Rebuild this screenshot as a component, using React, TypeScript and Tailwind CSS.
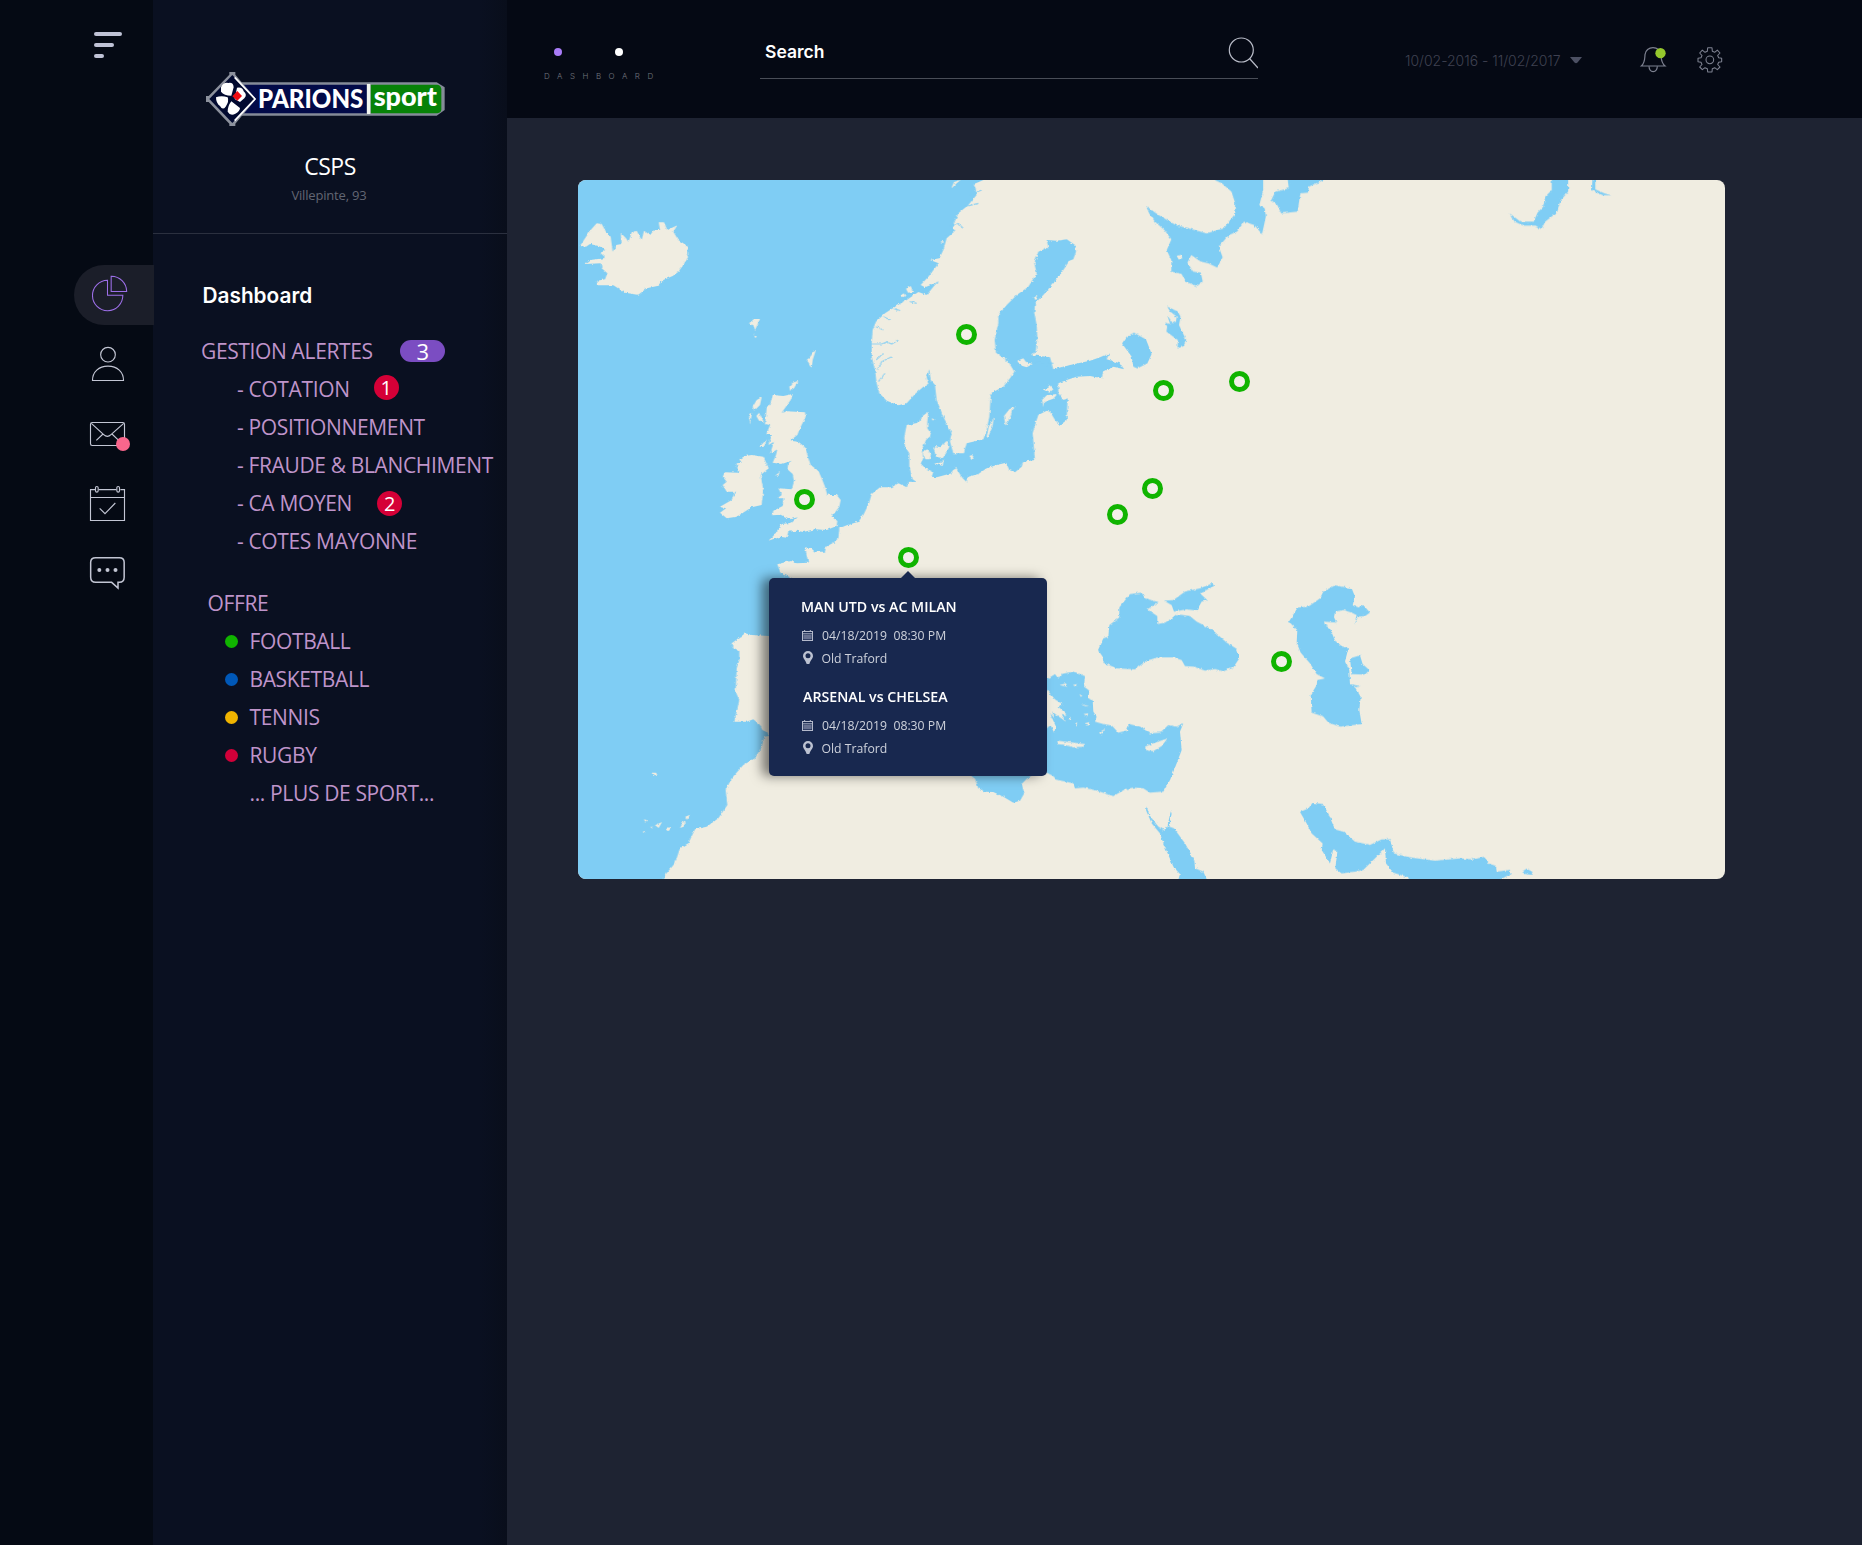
import type { ReactNode } from 'react';

const SEA = '#7fcdf4';
const LAND = '#f0ede1';

const sans = "font-['Open_Sans','Noto_Sans',sans-serif]";

function RailSlot({ viewBox, children }: { viewBox: string; children: ReactNode }) {
  return (
    <svg
      viewBox={viewBox}
      className="h-[70px] w-20 shrink-0"
      fill="none"
      stroke="#c3c6d4"
      strokeWidth="3.4"
    >
      {children}
    </svg>
  );
}

function Rail() {
  return (
    <nav className="flex w-[153px] shrink-0 flex-col bg-[#050a14]">
      <div className="mt-8 ml-[94px] flex h-[26px] flex-col justify-between">
        <span className="h-1 w-7 rounded-full bg-[#c0c3d6]" />
        <span className="h-1 w-5 rounded-full bg-[#c0c3d6]" />
        <span className="h-1 w-2.5 rounded-full bg-[#c0c3d6]" />
      </div>
      <div className="mt-[202px] ml-[74px] flex w-20 flex-col">
        <div className="relative z-10 flex h-[70px] items-center">
          <div className="my-[5px] flex h-[60px] w-20 items-center overflow-hidden rounded-l-full bg-[#1b1e29]">
            <svg viewBox="42 780 240 210" className="h-[70px] w-20 shrink-0" fill="none" stroke="#9d6fe8" strokeWidth="3.2">
              <path d="M142.500 841A45.500 45.500 0 1 0 188.500 886H142.500Z" />
              <path d="M153.500 829V874.500H200A46 46 0 0 0 153.500 829Z" />
            </svg>
          </div>
        </div>
        <RailSlot viewBox="42 0 240 210">
          <circle cx="144" cy="74" r="22" />
          <path d="M97.500 151.500C97.500 126 116 108.500 144 108.500S190.500 126 190.500 151.500Z" />
        </RailSlot>
        <RailSlot viewBox="42 210 240 210">
          <rect x="91.500" y="277.500" width="102" height="69" rx="5" />
          <path d="M94 280L131 314Q142 324 153 314L191 280M129 312L109 331M156 312L176 331" />
          <circle cx="189" cy="342" r="21" fill="#f9668c" stroke="none" />
        </RailSlot>
        <RailSlot viewBox="42 420 240 210">
          <path d="M105 479H91.500V571.500H193.500V479H181M116 479H169M91.500 502.500H193.500" />
          <rect x="106.500" y="469.500" width="8" height="17" rx="4" />
          <rect x="170.500" y="469.500" width="8" height="17" rx="4" />
          <path d="M119 535L135 551L166 519" />
        </RailSlot>
        <RailSlot viewBox="42 630 240 210">
          <path
            strokeWidth="4.500"
            d="M174 757H178Q192.500 757 192.500 742V697Q192.500 683 178 683H107Q92 683 92 697V742Q92 757 107 757H155L174 774Z"
          />
          <g fill="#c3c6d4" stroke="none">
            <circle cx="118" cy="720" r="6" />
            <circle cx="142.500" cy="720" r="6" />
            <circle cx="166.500" cy="720" r="6" />
          </g>
        </RailSlot>
      </div>
    </nav>
  );
}

function Logo() {
  return (
    <svg viewBox="438 216 717 162" className="h-[54px] w-[239px]">
      <path d="M540 247H1130L1154 262V330L1130 347H540Z" fill="#858b98" />
      <path d="M540 254H920V340H540Z" fill="#020a48" />
      <path d="M932 254H1132Q1144 256 1144 268V328Q1144 338 1132 340H932Z" fill="#078207" />
      <rect x="921" y="252" width="10" height="90" fill="#f2f5ef" />
      <path d="M508 216H526V224L588 297L526 371V378H508V371L446 306H438V288H446L508 224Z" fill="#8c919d" />
      <path d="M517 225L586 297L517 369L448 297Z" fill="#020a30" />
      <path d="M524 232L585 297L524 362" fill="none" stroke="#fff" strokeWidth="5" />
      <g fill="#fff">
        <path d="M483 262Q490 246 505 249Q520 246 521 262L514 287Q492 287 483 275Z" />
        <path d="M468 292Q484 286 503 292Q508 304 497 320Q488 332 480 318Q468 310 468 292Z" />
        <path d="M514 304L540 324Q540 334 526 341Q512 350 503 335Q503 318 514 304Z" />
        <path d="M531 263Q548 260 551 274Q563 284 553 295L540 306L524 297Z" />
      </g>
      <path d="M532 273L546 288L532 302L517 289Z" fill="#f00b10" />
      <g fill="#fff" className="font-['Lato','Noto_Sans',sans-serif] font-black">
        <text x="594" y="325" fontSize="79" textLength="316" lengthAdjust="spacingAndGlyphs">
          PARIONS
        </text>
        <text x="941" y="317" fontSize="82" textLength="190" lengthAdjust="spacingAndGlyphs">
          sport
        </text>
      </g>
    </svg>
  );
}

const alerts = [
  { label: 'COTATION', count: 1, nudge: '-mt-[5px]' },
  { label: 'POSITIONNEMENT' },
  { label: 'FRAUDE & BLANCHIMENT' },
  { label: 'CA MOYEN', count: 2, nudge: '-mt-px ml-px' },
  { label: 'COTES MAYONNE' },
];

const sports = [
  { label: 'FOOTBALL', dot: 'bg-[#10b400]' },
  { label: 'BASKETBALL', dot: 'bg-[#0058b8]' },
  { label: 'TENNIS', dot: 'bg-[#f0b400]' },
  { label: 'RUGBY', dot: 'bg-[#d10039]' },
];

function Sidebar() {
  return (
    <aside className="flex w-[354px] shrink-0 flex-col bg-[linear-gradient(to_right,#0a1021_92%,#090e1b)]">
      <div className="flex h-[234px] flex-col items-center border-b border-[#2b303f] pt-[72px]">
        <div className="-ml-[9px] h-[54px]">
          <Logo />
        </div>
        <p className={`${sans} mt-[25px] text-[23px] leading-[30px] tracking-[-0.5px] text-white`}>CSPS</p>
        <p className={`${sans} mt-1 -ml-[2px] text-[13px] leading-5 tracking-[-0.18px] text-[#626673]`}>Villepinte, 93</p>
      </div>
      <h1 className="mt-[47px] ml-[49.500px] font-['Inter',sans-serif] text-[20.8px] leading-[30px] font-semibold text-white">
        Dashboard
      </h1>
      <div className={`${sans} mt-[22px] text-[21px] tracking-[-0.36px] whitespace-nowrap text-[#bf94ca]`}>
        <div className="flex h-[38px] items-center pl-12">
          <span className="w-[199px]">GESTION ALERTES</span>
          <span className="-mt-[3px] flex h-[22px] w-[45px] items-center justify-center rounded-full bg-[#7b4dc2] text-[22px] leading-[22px] font-medium text-white">
            3
          </span>
        </div>
        <ul>
          {alerts.map((a) => (
            <li key={a.label} className="flex h-[38px] items-center gap-6 pl-[84px]">
              <span>- {a.label}</span>
              {a.count && (
                <span
                  className={`${a.nudge} flex size-[25px] items-center justify-center rounded-full bg-[#d50037] text-[20px] font-medium text-white`}
                >
                  {a.count}
                </span>
              )}
            </li>
          ))}
        </ul>
        <div className="mt-6 flex h-[38px] items-center pl-[54.500px]">OFFRE</div>
        <ul>
          {sports.map((s) => (
            <li key={s.label} className="flex h-[38px] items-center gap-[11.500px] pl-[72px]">
              <span className={`-mt-[2px] size-[13px] rounded-full ${s.dot}`} />
              <span>{s.label}</span>
            </li>
          ))}
          <li className="flex h-[38px] items-center pl-[96.500px]">... PLUS DE SPORT...</li>
        </ul>
      </div>
    </aside>
  );
}

function Header() {
  return (
    <header className="flex h-[118px] items-start bg-[#050914] font-['Inter',sans-serif]">
      <div className="mt-[47.5px] ml-[37px] w-[216px]">
        <div className="flex gap-[53px] pl-[10px]">
          <span className="size-2 rounded-full bg-[#a97cf8]" />
          <span className="size-2 rounded-full bg-white" />
        </div>
        <p className="mt-[14px] text-[8px] leading-3 font-light tracking-[7.5px] text-[#72767f]">DASHBOARD</p>
      </div>
      <div className="mt-[30px] flex h-[49px] w-[498px] items-start justify-between border-b border-[#494d57] pl-[5px]">
        <span className="mt-[10px] text-[17.5px] leading-6 font-semibold text-white">Search</span>
        <svg viewBox="0 0 34 34" className="mt-[5px] size-[34px]" fill="none" stroke="#b9bcc8" strokeWidth="1.200">
          <circle cx="17.300" cy="15" r="12" />
          <path d="M25.500 23.500L34 33" />
        </svg>
      </div>
      <div className="mt-[45.500px] ml-[147px] flex h-[30px] items-center text-[#3f4151]">
        <span className="w-[165px] text-[14px] font-light tracking-[-0.02px]">10/02-2016 - 11/02/2017</span>
        <svg viewBox="0 0 12 7" className="h-[7px] w-3">
          <path d="M0 0H12L7.500 5.500Q6 7 4.500 5.500Z" fill="#4c5063" />
        </svg>
      </div>
      <svg
        viewBox="838 75 90 90"
        className="mt-[45px] ml-[57px] size-[30px]"
        fill="none"
        stroke="#7d8190"
        strokeWidth="3.600"
      >
        <path d="M845 138C856 128 855 118 856 104C857 91 868 83 880 83S903 91 904 104C905 118 904 128 916 138Z" />
        <path d="M868 139C869 160 892 160 893 139" />
        <circle cx="902.500" cy="99.500" r="15.500" fill="#96c82d" stroke="none" />
      </svg>
      <svg
        viewBox="1005 74 90 90"
        className="mt-[45px] ml-[26px] size-[30px]"
        fill="none"
        stroke="#7d8190"
        strokeWidth="3.200"
        strokeLinejoin="round"
      >
        <path d="M1043 82.500H1056L1057 92.500L1064 96L1072 89.500L1080 98L1073 105.500L1076 112L1085 113.500V124.500L1076 126L1073 132.500L1080 140L1072 148L1064 142L1057 145L1056 155H1043L1042 145L1035 142L1027 148L1019 140L1026 132.500L1023 126L1014 124.500V113.500L1023 112L1026 105.500L1019 98L1027 89.500L1035 96L1042 92.500Z" />
        <circle cx="1049.500" cy="118.500" r="11.500" />
      </svg>
    </header>
  );
}

function EuropeMap() {
  return (
    <svg viewBox="24 30 3441 2097" className="block h-[699px] w-[1147px] rounded-lg">
      <defs>
        <filter id="coast" x="0" y="0" width="100%" height="100%">
          <feTurbulence type="fractalNoise" baseFrequency="0.1" numOctaves="2" seed="4" result="n" />
          <feDisplacementMap in="SourceGraphic" in2="n" scale="9" xChannelSelector="R" yChannelSelector="G" />
          <feGaussianBlur stdDeviation="1.2" />
        </filter>
      </defs>
      <rect x="24" y="30" width="3441" height="2097" fill={LAND} />
      <g filter="url(#coast)">
        {/* Atlantic, North Sea and Baltic */}
        <path
          fill={SEA}
          d="M-40 -30H1250L1240 30L1212 42L1222 72L1195 105L1165 130L1150 165L1152 185L1130 205L1120 240L1108 265L1080 270L1106 280L1075 320L1052 345L1065 352L1100 338L1070 375L1045 366L1010 390L975 410L945 430L918 455L908 480L905 520L905 560L915 600L920 640L928 670L950 692L985 706L1010 700L1035 672L1060 650L1075 645L1070 620L1078 598L1082 630L1095 645L1100 690L1120 740L1145 790L1140 815L1150 850L1182 850L1190 820L1240 808L1250 780L1258 740L1262 680L1265 668L1300 650L1320 625L1333 605L1315 575L1278 548L1274 510L1285 460L1285 435L1310 405L1340 375L1375 350L1400 310L1393 280L1405 245L1435 232L1430 210L1460 212L1490 208L1515 225L1518 245L1510 268L1498 272L1480 300L1450 340L1420 375L1395 400L1393 430L1400 465L1402 500L1398 540L1386 556L1440 562L1450 598L1500 585L1560 572L1590 562L1618 550L1610 568L1650 580L1662 598L1630 590L1600 605L1595 625L1560 618L1520 620L1490 630L1465 640L1465 670L1480 690L1493 685L1490 750L1470 766L1455 750L1440 725L1430 722L1405 735L1395 765L1388 790L1395 870L1360 875L1355 890L1335 907L1318 900L1308 878L1280 885L1250 895L1225 912L1190 922L1192 938L1178 925L1165 905L1158 890L1145 910L1100 922L1085 920L1090 905L1065 895L1052 880L1060 865L1055 840L1068 810L1085 795L1072 775L1072 755L1075 725L1058 738L1045 758L1010 765L1003 800L1005 830L1018 850L1018 890L1028 928L1040 936L1015 935L1010 952L985 940L965 952L930 952L905 972L897 1000L880 1035L865 1055L830 1066L808 1075L805 1105L790 1118L768 1130L765 1145L735 1145L722 1134L705 1132L715 1178L680 1180L660 1173L622 1183L632 1210L672 1226L750 1300L740 1398H597L545 1395L525 1390L510 1402L485 1420L492 1434L508 1443L508 1470L500 1495L497 1565L508 1590L493 1655L530 1655L550 1648L570 1665L577 1680L597 1690L597 1698L583 1700L575 1730L555 1765L520 1785L485 1825L467 1860L472 1905L445 1945L410 1970L375 1978L355 2020L330 2035L315 2080L285 2115L275 2160H-40Z"
        />
        <g fill={LAND}>
          {/* Iceland */}
          <path d="M30 228L45 205L62 180L80 160L95 162L108 185L122 200L125 222L128 245L138 225L155 222L152 188L168 205L175 215L185 190L200 182L215 210L222 182L240 195L252 180L270 180L266 157L282 157L292 180L322 166L310 185L325 210L352 228L355 260L340 285L325 305L308 318L280 330L262 348L230 355L205 374L165 368L130 346L82 346L82 332L105 328L112 310L95 295L92 280L45 282L60 270L108 264L92 250L108 238L85 228L60 222L48 230Z" />
          {/* Faroe, Shetland, Orkney and Hebrides */}
          <path d="M537 460L552 447L570 447L562 465L555 480L550 466ZM551 490L560 500L556 505ZM710 570L720 562L725 548L737 542L728 570L724 596L717 580ZM658 650L668 638L685 632L672 655L660 662Z" />
          <path d="M548 710L560 690L575 682L570 705L553 722ZM537 732L546 728L540 765ZM559 738L567 728L575 745L582 755L567 752Z" />
          {/* Great Britain */}
          <path d="M608 675L640 678L668 672L662 690L635 728L650 724L705 727L707 740L690 775L682 795L660 812L685 815L705 832L714 860L722 885L745 902L755 925L765 950L772 975L800 975L812 990L808 1010L785 1040L802 1053L800 1068L770 1080L735 1078L700 1086L680 1082L655 1085L650 1103L630 1100L595 1112L610 1098L635 1062L665 1058L683 1042L660 1048L635 1034L606 1036L610 1022L638 1008L640 985L622 985L635 975L625 955L665 958L672 935L668 912L652 898L655 880L665 872L635 882L608 878L618 855L622 838L600 852L612 815L595 825L606 795L588 795L600 765L585 762L590 715L602 700Z" />
          <path d="M568 832L590 808L582 830ZM618 915L630 905L624 918Z" />
          {/* Ireland */}
          <path d="M508 868L525 858L545 855L580 860L596 895L572 915L580 960L575 1005L545 1012L500 1040L470 1045L450 1028L468 1015L450 1010L485 990L495 965L470 965L458 945L470 935L458 920L465 907L505 908L500 880L515 878Z" />
          {/* Norwegian islands */}
          <path d="M1145 52L1152 36L1172 30L1160 40L1146 54ZM993 376L1001 370L1006 378L998 382ZM1008 356L1022 348L1030 366L1014 368ZM1111 216L1118 212L1121 220Z" />
          {/* Danish islands */}
          <path d="M1057 846L1072 838L1083 852L1080 868L1066 868ZM1092 840L1095 828L1112 832L1130 812L1138 830L1128 850L1118 865L1098 860ZM1092 880L1112 878L1122 868L1118 888ZM1085 745L1093 748L1088 752ZM1198 858L1206 855L1213 864L1206 868Z" />
          {/* Baltic islands */}
          <path d="M1302 738L1318 718L1337 709L1326 722L1320 745L1306 768ZM1249 805L1256 770L1271 742L1268 768L1255 800ZM1418 658L1432 655L1438 645L1450 658L1438 668ZM1416 690L1430 676L1462 672L1450 686L1422 696L1420 712ZM1342 572L1360 565L1368 576L1388 582L1370 592L1350 586ZM1392 382L1400 378L1404 386L1396 390Z" />
          {/* Canary Islands and Madeira */}
          <path d="M243 1808L258 1808L262 1814L252 1816ZM222 1948L230 1950L227 1960ZM218 1986L226 1982L224 1990ZM255 1966L276 1956L266 1974ZM287 1977Q294 1966 301 1977Q294 1989 287 1977ZM241 1970L249 1970L246 1976ZM330 1974L342 1952L347 1955L341 1970ZM346 1940L360 1934L350 1950Z" />
        </g>
        {/* Fjords */}
        <g fill="none" stroke={SEA} strokeWidth="3.500" strokeOpacity="0.8">
          <path d="M905 522L935 522L950 516L965 522L985 510M922 600L935 575L965 560M918 570L940 550M925 635L945 610M940 440L962 450M970 415L990 422M918 470L940 480M1120 205L1155 180M1140 170L1165 160L1180 175M1185 110L1225 100M1200 75L1235 60M1060 365L1105 335M1020 395L1040 400M1420 560L1430 590M1395 575L1450 580" />
        </g>
        {/* Tunisian gulf */}
        <path
          fill={SEA}
          d="M1180 1800L1215 1826L1225 1855L1245 1865L1270 1866L1300 1880L1330 1898L1350 1892L1363 1870L1355 1842L1375 1822L1430 1800L1430 1700H1180Z"
        />
        {/* White Sea, Pechora gulf and northern lakes */}
        <g transform="translate(1680 0) scale(1.148 1)" fill={SEA}>
          <path d="M222 10V30L240 40L265 65L275 100L272 135L245 175L200 190L170 180L120 165L75 135L42 108L50 130L65 155L90 180L108 208L96 240L108 270L108 305L135 312L145 335L175 348L190 335L185 308L165 305L150 278L160 255L185 275L205 280L228 293L242 262L232 230L258 195L280 185L298 155L325 165L345 192L355 140L352 115L338 105L348 60V10Z" />
          <path d="M410 10L415 55L380 65L369 90L385 105L395 130L438 125L445 70L465 68L468 50L505 30V10Z" />
          <path d="M97 410L125 425L132 440L128 465L147 510L140 528L124 536L125 510L95 485L97 470L92 458L105 462L97 435L112 460L120 455L122 440L105 425Z" />
          <path d="M1102 10V60L1085 80L1080 110L1065 128L1055 155L1020 155L992 130L1005 155L1028 167L1060 167L1075 177L1085 155L1115 128L1125 92L1145 65V10ZM1209 10H1216V58L1240 70L1258 76L1232 75L1207 60Z" />
        </g>
        <path fill={SEA} d="M1692 488L1728 508L1745 552L1732 580L1702 595L1690 590L1685 560L1656 520L1670 500Z" />
        <path fill={LAND} d="M1820 258L1832 254L1838 264L1826 268Z" />
        <g transform="translate(1380 1200)">
          {/* Eastern Mediterranean and Aegean */}
          <path
            fill={SEA}
            d="M-30 350L55 325L75 312L85 325L95 312L130 304L165 318L162 350L178 362L175 385L188 390L190 425L200 440L195 455L220 462L245 466L265 488L290 482L298 462L330 470L360 490L390 488L415 465L440 470L460 460L450 485L455 540L440 580L420 630L400 665L360 668L340 655L310 653L285 658L250 678L200 662L160 653L135 655L130 640L75 628L70 618L50 608L-20 590Z"
          />
          <g fill={LAND}>
            <path d="M50 358L75 388L98 402L85 410L112 435L95 432L108 455L80 435L66 425L75 445L60 430L78 470L72 488L62 465L50 475L35 420ZM82 512L105 515L165 522L162 530L130 532L100 524L84 522ZM345 530L375 518L412 506L395 528L370 543L350 542ZM207 488L222 478L215 495ZM128 345L140 342L138 350ZM88 345L108 340L112 350ZM152 400L165 405L180 410L165 408ZM115 448L120 440L124 448ZM165 460L178 456L176 466L168 466ZM148 372L158 378L152 380ZM135 462L142 456L140 470ZM160 432L175 430L172 438Z" />
          </g>
          <g fill={SEA}>
            {/* Black Sea and Sea of Azov */}
            <path d="M300 72L335 68L345 85L386 96L352 118L382 138L382 162L405 158L425 145L440 132L480 138L500 155L545 178L590 218L618 235L628 265L610 292L580 304L555 297L525 302L490 290L465 288L455 270L430 262L385 262L350 272L315 298L260 295L220 278L218 260L204 240L220 205L235 200L238 165L268 142L268 112Z" />
            <path d="M402 92L430 90L465 65L510 55L548 40L552 48L510 70L532 90L515 95L500 122L470 118L432 125L425 105Z" />
            {/* Caspian Sea */}
            <path d="M915 46L965 55L975 80L968 105L985 112L1000 105L1020 128L1005 138L985 140L972 162L980 135L965 128L940 120L915 125L912 142L920 158L882 155L885 165L900 175L915 212L935 228L955 235L945 275L958 300L960 342L992 348L975 352L992 380L988 420L995 462L930 470L895 458L880 440L845 428L842 375L860 345L862 330L885 325L860 312L840 280L812 248L800 218L802 180L777 155L803 113L835 110L870 85L880 65Z" />
            <path d="M960 265L990 256L998 282L1018 300L1005 314L965 312Z" />
            {/* Red Sea */}
            <path d="M350 710L358 735L385 770L402 780L412 770L422 725L425 730L418 770L432 775L465 820L493 870L495 895L520 905L538 945H440L450 912L430 890L400 820L390 790L365 760L348 720Z" />
          </g>
        </g>
        {/* Persian Gulf and Gulf of Oman */}
        <g transform="translate(2190 1830)">
          <path
            fill={SEA}
            d="M0 96L25 85L38 68L68 72L85 100L105 148L130 155L165 185L210 195L245 178L270 178L282 220L330 232L405 242L480 235L520 238L555 230L565 250L588 258L590 275L630 270L632 282L605 297V330H335L325 292L280 278L258 250L255 205L215 245L190 270L165 275L125 280L106 265L112 215L100 208L90 250L65 210L68 190L35 160L20 130Z"
          />
          <path fill={SEA} d="M666 275L680 266L698 276L694 285L675 282Z" />
        </g>
      </g>
    </svg>
  );
}

const markers = [
  { x: 216, y: 309 },
  { x: 378, y: 144 },
  { x: 320, y: 367 },
  { x: 575, y: 200 },
  { x: 651, y: 191 },
  { x: 564, y: 298 },
  { x: 529, y: 324 },
  { x: 693, y: 471 },
];

const matches = [
  { title: 'MAN UTD vs AC MILAN', date: '04/18/2019', time: '08:30 PM', place: 'Old Traford', inset: 'pl-0' },
  { title: 'ARSENAL vs CHELSEA', date: '04/18/2019', time: '08:30 PM', place: 'Old Traford', inset: 'pl-0.5' },
];

function MatchPopup() {
  return (
    <div
      className={`${sans} absolute top-[398px] left-[191px] h-[198px] w-[278px] rounded-[5px] bg-[#18284f] pt-[18px] pl-8 shadow-[-7px_0_12px_rgba(0,0,0,0.5)]`}
    >
      <svg viewBox="0 0 16 8" className="absolute -top-[7px] left-[131px] h-2 w-4">
        <path d="M0 8L8 0L16 8Z" fill="#18284f" />
      </svg>
      {matches.map((m) => (
        <div key={m.title} className="mb-[15px]">
          <h2 className={`${m.inset} text-[14.2px] leading-[22px] font-semibold whitespace-nowrap text-white`}>{m.title}</h2>
          <div className="mt-[7px] flex h-[23px] items-center gap-[9px] text-[12.25px] text-[#ced2dc]">
            <svg viewBox="0 0 33 33" className="-mt-[3px] ml-px size-[11px]" fill="none" stroke="#b4bacb" strokeWidth="3">
              <rect x="1.500" y="4.500" width="30" height="27" />
              <path d="M1 11.500H32M8 0V6M25 0V6" />
              <rect x="4" y="15" width="25" height="13" fill="#66708f" stroke="none" />
            </svg>
            <span className="whitespace-pre">{`${m.date}  ${m.time}`}</span>
          </div>
          <div className="flex h-[23px] items-center gap-[9px] text-[12.25px] text-[#ced2dc]">
            <svg viewBox="0 0 30 39" className="-mt-1 ml-[1.500px] h-[13px] w-[10px]" fill="#bcc2d1">
              <path
                fillRule="evenodd"
                d="M15 0A15 15 0 0 1 30 15C30 23 22 28 19 39H11C8 28 0 23 0 15A15 15 0 0 1 15 0ZM15 7A7.500 7.500 0 1 0 15 22A7.500 7.500 0 1 0 15 7Z"
              />
            </svg>
            <span>{m.place}</span>
          </div>
        </div>
      ))}
    </div>
  );
}

export default function App() {
  return (
    <div className="flex h-[1545px] w-[1862px] overflow-hidden bg-[#1e2332]">
      <Rail />
      <Sidebar />
      <main className="flex min-w-0 flex-1 flex-col">
        <Header />
        <section className="relative mt-[62px] ml-[71px] h-[699px] w-[1147px]">
          <EuropeMap />
          {markers.map((m) => (
            <span
              key={`${m.x}-${m.y}`}
              className="absolute size-[21px] rounded-full border-5 border-[#10b400] bg-[#f3f0ea]"
              style={{ left: m.x, top: m.y }}
            />
          ))}
          <MatchPopup />
        </section>
      </main>
    </div>
  );
}
